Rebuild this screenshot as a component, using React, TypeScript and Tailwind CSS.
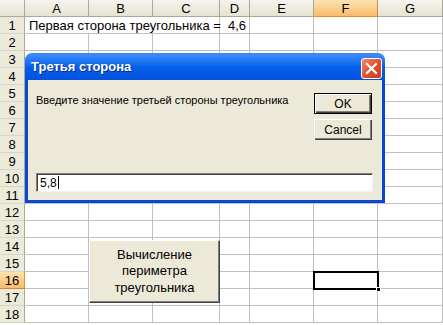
import React from "react";

const letters = ["A", "B", "C", "D", "E", "F", "G"];
const rows = Array.from({ length: 18 }, (_, i) => i + 1);

function HeaderCell({ label, active }: { label: string; active?: boolean }) {
  return (
    <div
      className={
        active
          ? "h-[17px] flex items-center justify-center border-r border-b border-r-[#c98a3a] border-b-[#e88f2a] bg-linear-to-b from-[#fde2b0] to-[#f8bc6b] text-[13px] leading-none text-black"
          : "h-[17px] flex items-center justify-center border-r border-b border-r-[#aca899] border-b-[#aca899] bg-linear-to-b from-[#f5f4ee] to-[#e6e3d3] text-[13px] leading-none text-black"
      }
    >
      {label}
    </div>
  );
}

function RowHeader({ n }: { n: number }) {
  const active = n === 16;
  return (
    <div
      className={
        active
          ? "h-[17px] flex items-center justify-center border-r border-b border-r-[#e88f2a] border-b-[#c98a3a] bg-linear-to-b from-[#fde2b0] to-[#f8bc6b] text-[13px] leading-none text-black"
          : "h-[17px] flex items-center justify-center border-r border-b border-r-[#aca899] border-b-[#d8d5c5] bg-[#ecead9] text-[13px] leading-none text-black"
      }
    >
      {n}
    </div>
  );
}

function Cell() {
  return <div className="h-[17px] border-r border-b border-[#c0c0c0]" />;
}

export default function App() {
  return (
    <div
      className="relative w-[443px] h-[325px] overflow-hidden bg-white text-black"
      style={{ fontFamily: '"Liberation Sans", Arial, sans-serif' }}
    >
      {/* Spreadsheet grid */}
      <div className="grid grid-cols-[25px_64px_64px_67px_30px_64px_64px_65px]">
        <div className="h-[17px] border-r border-b border-[#aca899] bg-linear-to-b from-[#f5f4ee] to-[#e6e3d3]" />
        {letters.map((l) => (
          <HeaderCell key={l} label={l} active={l === "F"} />
        ))}
        {rows.map((r) => (
          <React.Fragment key={r}>
            <RowHeader n={r} />
            {r === 1 ? (
              <>
                <div className="col-span-3 h-[17px] border-r border-b border-[#c0c0c0] pl-[4px] text-[13px] leading-[17px] whitespace-nowrap">
                  Первая сторона треугольника =
                </div>
                <div className="h-[17px] border-r border-b border-[#c0c0c0] pr-[3px] text-right text-[13px] leading-[17px]">
                  4,6
                </div>
                <Cell />
                <Cell />
                <Cell />
              </>
            ) : (
              letters.map((l) => <Cell key={l} />)
            )}
          </React.Fragment>
        ))}
      </div>

      {/* Active cell F16 */}
      <div className="absolute left-[313px] top-[271px] w-[66px] h-[19px] border-2 border-black" />
      <div className="absolute left-[376px] top-[287px] w-[5px] h-[5px] bg-black border border-white" />

      {/* Sheet button */}
      <div className="absolute left-[89px] top-[240px] w-[131px] h-[63px] bg-[#ece9d8] border-t border-l border-t-white border-l-white border-r border-b border-r-[#404040] border-b-[#404040] shadow-[inset_-1px_-1px_#808080] flex flex-col items-center justify-center text-[13px] leading-[16.5px] text-black">
        <span>Вычисление</span>
        <span>периметра</span>
        <span>треугольника</span>
      </div>

      {/* InputBox dialog */}
      <div className="absolute left-[25px] top-[53px] w-[360px] flex flex-col">
        <div className="relative h-[27px] rounded-t-[7px] bg-linear-to-b from-[#3d8df8] via-[#0560ec] to-[#0350dc] border-t border-t-[#3a83f5] flex items-center pl-[6px]">
          <span className="text-white font-bold text-[13px] [text-shadow:1px_1px_#0b2a8a]">
            Третья сторона
          </span>
          <div className="absolute right-[3px] top-[4px] w-[21px] h-[21px] rounded-[3px] border border-white bg-linear-to-br from-[#ef8a6b] via-[#e0512f] to-[#c83c1c] flex items-center justify-center">
            <svg width="13" height="13" viewBox="0 0 13 13">
              <path d="M2 2 L11 11 M11 2 L2 11" stroke="white" strokeWidth="2.2" strokeLinecap="square" />
            </svg>
          </div>
        </div>
        <div className="bg-[#ece9d8] border-[3px] border-t-0 border-[#0747d6] pt-[13px] pl-[8px] pr-[10px] pb-[8px] flex flex-col">
          <div className="flex h-[47px]">
            <div className="flex-1 text-[11px] leading-[13px] pt-[1px]">
              Введите значение третьей стороны треугольника
            </div>
            <div className="flex flex-col gap-[5px] w-[58px]">
              <div className="h-[21px] border border-black bg-[#ece9d8] shadow-[inset_1px_1px_#fff,inset_-1px_-1px_#404040,inset_-2px_-2px_#808080] flex items-center justify-center text-[12px]">
                OK
              </div>
              <div className="h-[21px] bg-[#ece9d8] shadow-[inset_1px_1px_#fff,inset_-1px_-1px_#404040,inset_-2px_-2px_#808080] flex items-center justify-center text-[12px]">
                Cancel
              </div>
            </div>
          </div>
          <div className="mt-[33px] h-[19px] w-[337px] bg-white border-t border-l border-t-[#808080] border-l-[#808080] border-r border-b border-r-[#f4f3ee] border-b-[#f4f3ee] shadow-[inset_1px_1px_#404040] flex items-center pl-[3px] text-[12px]">
            <span>5,8</span>
            <span className="w-px h-[13px] bg-black ml-[1px]" />
          </div>
        </div>
      </div>
    </div>
  );
}
